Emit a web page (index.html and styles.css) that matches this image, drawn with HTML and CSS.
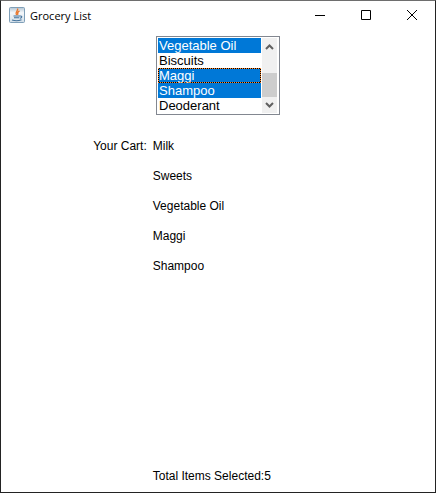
FILE: index.html
```html
<!DOCTYPE html>
<html lang="en">
<head>
<meta charset="utf-8">
<title>Grocery List</title>
<link rel="stylesheet" href="styles.css">
</head>
<body>
<div class="window">
  <header class="titlebar">
    <svg class="app-icon" viewBox="0 0 16 16" aria-hidden="true">
      <defs><linearGradient id="tile" x1="0" y1="0" x2="0" y2="1"><stop offset="0" stop-color="#b4c6d4"/><stop offset=".35" stop-color="#f4f7fa"/><stop offset="1" stop-color="#d3dfe8"/></linearGradient></defs>
      <rect x=".5" y=".5" width="15" height="15" rx="1" fill="url(#tile)" stroke="#7f9fb8"/>
      <path d="M8.500 1.500C9.800 3.800 5.500 4.700 7.500 8M10.500 3.800C8 5 8.500 6 8.800 7.800" fill="none" stroke="#e9782f" stroke-width="1.400"/>
      <path d="M4.500 9h6.300M5 10.800h5.200M3 13q5 1.500 9.500-.3M10.800 9q3-.3 1.500 1.700l-1.500.6" fill="none" stroke="#41709a" stroke-width="1.100"/>
    </svg>
    <h1 class="title">Grocery List</h1>
    <button class="caption" type="button" aria-label="Minimize"><svg viewBox="0 0 10 10"><path d="M0 5.500h10"/></svg></button>
    <button class="caption" type="button" aria-label="Maximize"><svg viewBox="0 0 10 10"><path d="M.5.500h9v9h-9z"/></svg></button>
    <button class="caption" type="button" aria-label="Close"><svg viewBox="0 0 10 10"><path d="M0 0l10 10M10 0L0 10"/></svg></button>
  </header>
  <main class="content">
    <div class="listbox">
      <select class="items" multiple size="5" aria-label="Grocery items">
        <option selected>Milk</option>
        <option>Bread</option>
        <option selected>Sweets</option>
        <option>Eggs</option>
        <option selected>Vegetable Oil</option>
        <option>Biscuits</option>
        <option class="current" selected>Maggi</option>
        <option selected>Shampoo</option>
        <option>Deoderant</option>
      </select>
      <div class="scrollbar">
        <button class="arrow" type="button" aria-label="Scroll up"><svg viewBox="0 0 15 16"><path d="M4 11l3.500-3.500 3.500 3.500"/></svg></button>
        <div class="track"><div class="thumb"></div></div>
        <button class="arrow" type="button" aria-label="Scroll down"><svg viewBox="0 0 15 16"><path d="M4 6l3.500 3.500 3.500-3.500"/></svg></button>
      </div>
    </div>
    <section class="cart">
      <h2 class="cart-label">Your Cart:</h2>
      <ul class="cart-list">
        <li>Milk</li>
        <li>Sweets</li>
        <li>Vegetable Oil</li>
        <li>Maggi</li>
        <li>Shampoo</li>
      </ul>
      <p class="total">Total Items Selected:5</p>
    </section>
  </main>
</div>
<script src="script.js"></script>
</body>
</html>
```
FILE: styles.css
```css
* {
  box-sizing: border-box;
}

body {
  margin: 0;
  background: #fff;
  color: #000;
  font: 12px/16px "Liberation Sans", Arial, sans-serif;
}

.window {
  display: flex;
  flex-direction: column;
  min-height: 100vh;
  border: 1px solid #232323;
  border-top-color: #6e6e6e;
}

.titlebar {
  display: flex;
  align-items: center;
  height: 28px;
  padding-left: 8px;
}

.app-icon {
  width: 16px;
  height: 16px;
  margin-right: 5px;
}

.title {
  flex: 1;
  margin: 0;
  padding-top: 2px;
  font: 11px/16px "Open Sans", "Noto Sans", sans-serif;
}

.caption {
  display: grid;
  place-items: center;
  width: 46px;
  height: 28px;
  padding: 0;
  border: 0;
  background: none;
}

.caption svg {
  width: 10px;
  height: 10px;
  overflow: visible;
  fill: none;
  stroke: #000;
}

.content {
  display: flex;
  flex: 1;
  flex-direction: column;
  align-items: center;
  padding-top: 7px;
}

.listbox {
  display: flex;
  width: 124px;
  height: 79px;
  padding: 1px;
  border: 1px solid #828790;
}

.items {
  flex: 1;
  min-width: 0;
  height: 75px;
  padding: 0;
  border: 0;
  border-radius: 0;
  outline: 0;
  background: #fff;
  font: 13px/15px "Liberation Sans", Arial, sans-serif;
  scrollbar-width: none;
}

.items option {
  height: 15px;
  min-height: 15px;
  padding: 0 1px;
  line-height: 15px;
  color: #000;
}

.items option:checked {
  background: #0078d7 linear-gradient(#0078d7, #0078d7);
  color: #fff;
  -webkit-text-fill-color: #fff;
}

.items option.current {
  outline: 1px dotted #ff8728;
  outline-offset: -1px;
  box-shadow: inset 0 0 0 1px #000;
}

.scrollbar {
  display: flex;
  flex-direction: column;
  width: 15px;
  margin: 0 1px;
  background: #f0f0f0;
}

.arrow {
  display: block;
  height: 16px;
  padding: 0;
  border: 0;
  background: none;
}

.arrow svg {
  display: block;
  width: 15px;
  height: 16px;
  fill: none;
  stroke: #606060;
  stroke-width: 2;
}

.track {
  display: flex;
  flex: 1;
  flex-direction: column;
  justify-content: flex-end;
}

.thumb {
  height: 24px;
  background: #cdcdcd;
}

.cart {
  display: grid;
  flex: 1;
  grid-template-columns: auto auto;
  grid-template-rows: auto 1fr;
  column-gap: 6px;
  margin-top: 23px;
  padding-right: 72px;
}

.cart-label {
  margin: 0;
  font: inherit;
}

.cart-list {
  display: grid;
  gap: 14px;
  margin: 0;
  padding: 0;
  list-style: none;
}

.total {
  grid-column: 2;
  align-self: end;
  margin: 0 0 8px;
}
```
FILE: script.js
```js
// Show the end of the list first; the arrows step by one row.
const items = document.querySelector(".items");
const [up, down] = document.querySelectorAll(".arrow");
items.scrollTop = items.scrollHeight;
requestAnimationFrame(() => {
  items.scrollTop = items.scrollHeight;
});
up.addEventListener("click", () => items.scrollBy(0, -15));
down.addEventListener("click", () => items.scrollBy(0, 15));
```
